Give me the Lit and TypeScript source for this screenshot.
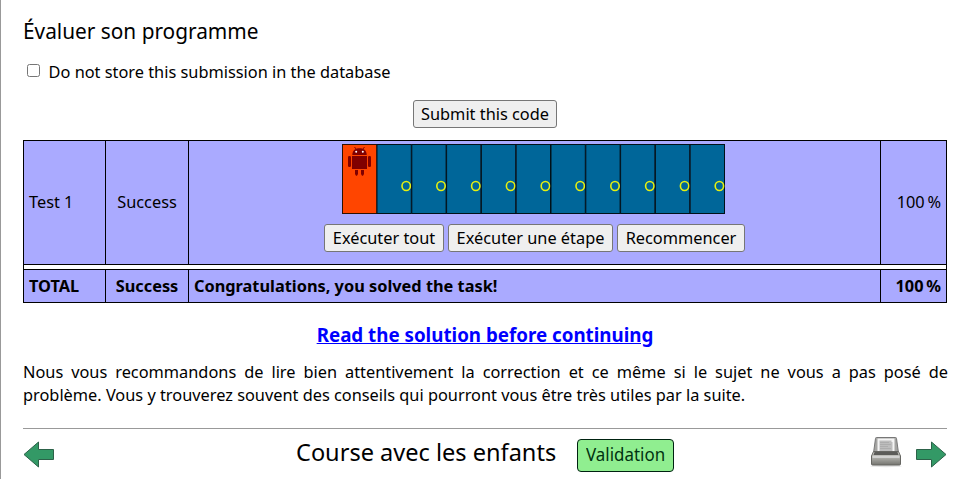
import { LitElement, html, css, svg } from "lit";
import { customElement } from "lit/decorators.js";

const PITCH = 34.8;
const doors = Array.from({ length: 10 }, (_, i) => i + 1);

@customElement("race-board")
class RaceBoard extends LitElement {
  static styles = css`
    :host { display: block; width: 383px; height: 70px; }
    svg { display: block; }
  `;
  render() {
    return html`<svg width="383" height="70" viewBox="0 0 383 70">
      <rect x="0.5" y="0.5" width="34.3" height="69" fill="#ff4500" stroke="#301000"></rect>
      ${doors.map((i) => svg`
        <rect x=${i * PITCH + 0.2} y="0.5" width=${PITCH - 0.5} height="69" fill="#006699" stroke="#001018"></rect>
        <ellipse cx=${i * PITCH + 29.4} cy="42" rx="4.2" ry="4.5" fill="none" stroke="#e6f010" stroke-width="1.6"></ellipse>`)}
      <g fill="#800000">
        <path d="M10.300 11C10.300 7 13 4.300 17.500 4.300S24.700 7 24.700 11Z"></path>
        <path d="M12.500 3l2 2.500M22.500 3l-2 2.500" stroke="#800000" stroke-width="1"></path>
        <rect x="10" y="12" width="15" height="13"></rect>
        <rect x="6" y="12" width="3" height="11" rx="1.3"></rect>
        <rect x="26" y="12" width="3" height="11" rx="1.3"></rect>
        <path d="M13 26h3v4l-1 1.700h-1l-1-1.700zM19 26h3v4l-1 1.700h-1l-1-1.700z"></path>
      </g>
      <circle cx="14.2" cy="7.800" r="1" fill="#fff"></circle>
      <circle cx="20.8" cy="7.800" r="1" fill="#fff"></circle>
    </svg>`;
  }
}

@customElement("app-root")
class AppRoot extends LitElement {
  static styles = css`
    :host {
      display: block; box-sizing: border-box; width: 964px; height: 479px; overflow: hidden;
      border-left: 1px solid #999; padding: 0 17px 0 22px; background: #fff; color: #000;
      font: 16.34px/23px "Noto Sans", sans-serif;
    }
    h2 { margin: 0; padding-top: 15px; font: 400 22px/30px "Noto Sans", sans-serif; white-space: nowrap; }
    h2 span, .name span, .badge span { display: inline-block; transform-origin: 0 50%; }
    h2 span { transform: scaleX(0.946); }
    .name span { transform: scaleX(0.981); }
    .badge span { transform: scaleX(0.94); }
    .option { display: flex; align-items: center; height: 23px; margin-top: 16px; }
    .option input { margin: 0 8.6px 4px 4px; width: 13px; height: 13px; }
    .submit { display: flex; justify-content: center; margin-top: 16px; }
    button {
      box-sizing: border-box; height: 28px; padding: 0; margin: 0; border: 1px solid #767676; border-radius: 3px;
      background: #efefef; color: #000; font: 16.34px/24px "Noto Sans", sans-serif; white-space: nowrap; text-align: center;
    }
    .submit button { width: 144px; }
    .results {
      display: grid; grid-template-columns: 82px 83px 692px 65px; grid-template-rows: 123px 6px 32px;
      width: 922px; border: 1px solid #000; margin-top: 12px;
    }
    .cell { display: flex; align-items: center; background: #aaf; padding: 0 5px; border-right: 1px solid #000; }
    .cell.last { border-right: 0; justify-content: flex-end; }
    .center { justify-content: center; }
    .total { font-weight: 700; }
    .gap { grid-column: 1 / -1; border: solid #000; border-width: 1px 0; background: #fff; }
    .run { flex-direction: column; justify-content: flex-start; padding-top: 3px; }
    race-board { margin-right: 2px; }
    .actions { display: grid; grid-template-columns: 120px 165px 128px; gap: 4px; margin-top: 10px; }
    .solution { text-align: center; margin-top: 20px; font-size: 18.75px; font-weight: 700; }
    .solution a { color: #0000ff; text-decoration: underline; }
    p { margin: 15px 0 0; text-align: justify; width: 925px; }
    footer { display: flex; align-items: flex-start; margin-top: 21px; border-top: 1px solid #999; height: 49px; }
    footer > * { flex: none; }
    .prev { margin: 12px 0 0; }
    .name { margin: 7px 0 0 241px; width: 260px; font-size: 24px; line-height: 32px; white-space: nowrap; }
    .badge {
      box-sizing: border-box; margin: 10px 0 0 21px; width: 97px; height: 33px; border: 1px solid #021; border-radius: 4px;
      background: #90ee90; color: #031; padding-left: 8px; font-size: 18px; line-height: 29px; white-space: nowrap;
    }
    .print { margin: 5px 0 0 195px; }
    .next { margin: 12px 0 0 12px; }
    svg { display: block; }
  `;
  render() {
    return html`
      <h2><span>Évaluer son programme</span></h2>
      <label class="option"><input type="checkbox" />Do not store this submission in the database</label>
      <div class="submit"><button>Submit this code</button></div>
      <div class="results">
        <div class="cell">Test 1</div>
        <div class="cell center">Success</div>
        <div class="cell run">
          <race-board></race-board>
          <div class="actions">
            <button>Exécuter tout</button><button>Exécuter une étape</button><button>Recommencer</button>
          </div>
        </div>
        <div class="cell last">100&#8239;%</div>
        <div class="gap"></div>
        <div class="cell total">TOTAL</div>
        <div class="cell center total">Success</div>
        <div class="cell total">Congratulations, you solved the task!</div>
        <div class="cell last total">100&#8239;%</div>
      </div>
      <div class="solution"><a>Read the solution before continuing</a></div>
      <p>Nous vous recommandons de lire bien attentivement la correction et ce même si le sujet ne vous a pas posé de problème. Vous y trouverez souvent des conseils qui pourront vous être très utiles par la suite.</p>
      <footer>
        <svg class="prev" width="32" height="28" viewBox="0 0 32 28">
          <path d="M1 13.500L15.500 1V8.500H30.500V18.500H15.500V26Z" fill="#339966" stroke="#2c6249"></path>
        </svg>
        <div class="name"><span>Course avec les enfants</span></div>
        <div class="badge"><span>Validation</span></div>
        <svg class="print" width="34" height="34" viewBox="0 0 34 34">
          <defs>
            <linearGradient id="body" x2="0" y2="1"><stop stop-color="#d5d5d0"></stop><stop offset=".4" stop-color="#b5b5b0"></stop><stop offset="1" stop-color="#74746f"></stop></linearGradient>
          </defs>
          <ellipse cx="17" cy="32" rx="16" ry="1.2" fill="#e4e4e4"></ellipse>
          <path d="M6.500 4.500Q6.500 3.500 7.500 3.500H26.500Q27.500 3.500 27.500 4.500L29.500 19H4.500Z" fill="#a5a5a3" stroke="#777"></path>
          <path d="M8.500 4.500H25.500V18H8.500Z" fill="#f4f4f4"></path>
          <path d="M10.500 6.500h12v1.500h1v9h-13z" fill="#bdbdbd"></path>
          <path d="M11 8.500h9M11 10.500h11M11 12.500h8M11 14.500h11" stroke="#adadad"></path>
          <path d="M4.500 17.500H29.500L31.500 22V30Q31.500 31 30.500 31H3.500Q2.500 31 2.500 30V22Z" fill="url(#body)" stroke="#666662"></path>
          <path d="M5.500 18H28.500L29.500 21H4.500Z" fill="#5c5c59"></path>
          <path d="M3.500 23H30.500" stroke="#ddd" stroke-width="1.500"></path>
        </svg>
        <svg class="next" width="32" height="28" viewBox="0 0 32 28">
          <path d="M31 13.500L16.500 1V8.500H1.500V18.500H16.500V26Z" fill="#339966" stroke="#2c6249"></path>
        </svg>
      </footer>`;
  }
}
